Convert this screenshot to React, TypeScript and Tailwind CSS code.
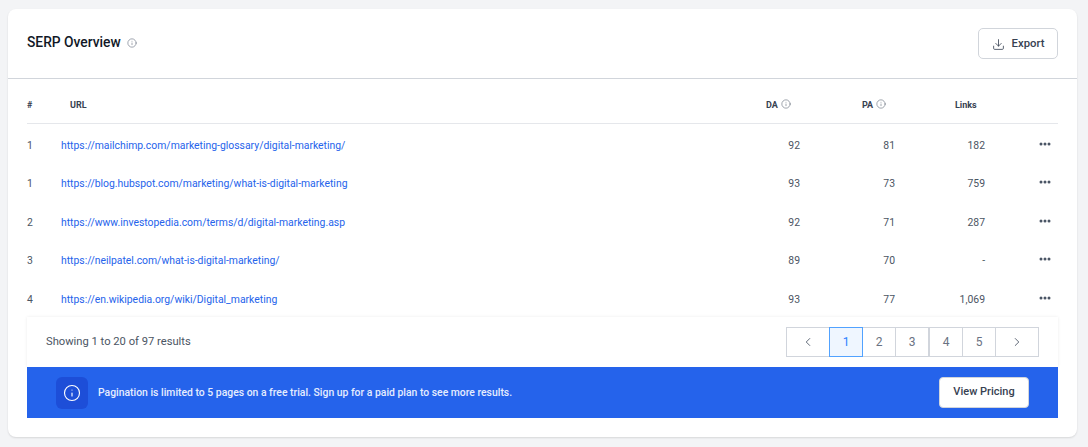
import React from "react";
import { ChevronLeft, ChevronRight, Download, Info } from "lucide-react";

const rows = [
  { n: 1, url: "https://mailchimp.com/marketing-glossary/digital-marketing/", da: 92, pa: 81, links: "182" },
  { n: 1, url: "https://blog.hubspot.com/marketing/what-is-digital-marketing", da: 93, pa: 73, links: "759" },
  { n: 2, url: "https://www.investopedia.com/terms/d/digital-marketing.asp", da: 92, pa: 71, links: "287" },
  { n: 3, url: "https://neilpatel.com/what-is-digital-marketing/", da: 89, pa: 70, links: "-" },
  { n: 4, url: "https://en.wikipedia.org/wiki/Digital_marketing", da: 93, pa: 77, links: "1,069" },
];

const Dots = () => (
  <svg width="12" height="4" viewBox="0 0 12 4" className="text-gray-600" fill="currentColor">
    <circle cx="2" cy="2" r="1.5" />
    <circle cx="6" cy="2" r="1.5" />
    <circle cx="10" cy="2" r="1.5" />
  </svg>
);

const PageCell: React.FC<{ children: React.ReactNode; active?: boolean; wide?: boolean; flush?: boolean }> = ({
  children,
  active,
  wide,
  flush,
}) => (
  <div
    className={`flex h-[30px] items-center justify-center border text-[12px] ${flush ? "" : "-ml-px"} ${
      wide ? "w-[44px]" : "w-[34px]"
    } ${active ? "relative z-10 border-blue-400 bg-blue-50 text-blue-500" : "border-gray-300 bg-white text-gray-500"}`}
  >
    {children}
  </div>
);

export default function App() {
  return (
    <div className="h-[447px] w-[1088px] overflow-hidden bg-[#f3f4f6] pl-2 pr-[11px] pt-[9px] font-['Roboto',sans-serif]">
      <div className="h-[428px] rounded-lg bg-white shadow-[0_1px_2px_rgba(0,0,0,0.12)]">
        {/* header */}
        <div className="flex h-[70px] items-start justify-between border-b border-[#d1d5db] pl-[19px] pr-[19px]">
          <div className="mt-[24px] flex items-center">
            <h2 className="text-[13.8px] font-medium leading-[18px] text-[#111827]">SERP Overview</h2>
            <Info size={10} strokeWidth={1.5} className="ml-[6px] mt-px text-gray-500" />
          </div>
          <button
            type="button"
            className="mt-[19px] flex h-[31px] w-[80px] items-center justify-center gap-[7px] rounded-[5px] border border-[#d1d5db] bg-white pt-px text-[11.3px] font-medium text-[#374151]"
          >
            <Download size={13} strokeWidth={1.5} />
            Export
          </button>
        </div>

        <div className="px-[19px]">
          {/* table head */}
          <div className="flex h-[45px] items-center border-b border-[#e5e7eb] pt-[9px] text-[9px] font-bold text-[#374151]">
            <div className="w-[43px]">#</div>
            <div className="flex-1">URL</div>
            <div className="flex w-[96px] items-center gap-[3px]">
              DA <Info size={10} strokeWidth={1.25} className="-mt-[4px] text-gray-600" />
            </div>
            <div className="flex w-[93px] items-center gap-[3px]">
              PA <Info size={10} strokeWidth={1.25} className="-mt-[4px] text-gray-600" />
            </div>
            <div className="w-[103px]">Links</div>
          </div>

          {/* rows */}
          <div className="h-[193px] pt-[2.5px]">
            {rows.map((r, i) => (
              <div key={i} className="flex h-[38.5px] items-center text-[10.4px] text-[#4b5563]">
                <div className="w-[34px]">{r.n}</div>
                <div className="flex-1 text-[#2563eb]">{r.url}</div>
                <div className="w-[60px] text-right">{r.da}</div>
                <div className="w-[95px] text-right">{r.pa}</div>
                <div className="w-[90px] text-right">{r.links}</div>
                <div className="flex w-[73px] justify-end pb-[4px] pr-[7px]">
                  <Dots />
                </div>
              </div>
            ))}
          </div>

          {/* pagination */}
          <div className="relative flex h-[50px] items-center justify-between bg-white pl-[19px] pr-[19px] shadow-[0_0_3px_rgba(0,0,0,0.08)]">
            <span className="text-[11.2px] text-[#4b5563]">Showing 1 to 20 of 97 results</span>
            <div className="flex">
              <PageCell wide flush>
                <ChevronLeft size={14} strokeWidth={1.5} className="text-gray-600" />
              </PageCell>
              <PageCell active>1</PageCell>
              <PageCell>2</PageCell>
              <PageCell>3</PageCell>
              <PageCell flush>4</PageCell>
              <PageCell>5</PageCell>
              <PageCell wide>
                <ChevronRight size={14} strokeWidth={1.5} className="text-gray-600" />
              </PageCell>
            </div>
          </div>

          {/* free trial banner */}
          <div className="relative flex h-[51px] items-center justify-between bg-[#2563eb] pl-[29px] pr-[29px]">
            <div className="flex items-center gap-[10px]">
              <div className="flex h-[32px] w-[32px] items-center justify-center rounded-md bg-[#1d4ed8]">
                <Info size={18} strokeWidth={1.5} className="text-white" />
              </div>
              <span className="text-[10.4px] font-medium text-[#e5edff]">
                Pagination is limited to 5 pages on a free trial. Sign up for a paid plan to see more results.
              </span>
            </div>
            <button
              type="button"
              className="h-[31px] w-[90px] rounded-[4px] border border-gray-300 bg-white text-[11px] font-medium text-[#374151]"
            >
              View Pricing
            </button>
          </div>
        </div>
      </div>
    </div>
  );
}
